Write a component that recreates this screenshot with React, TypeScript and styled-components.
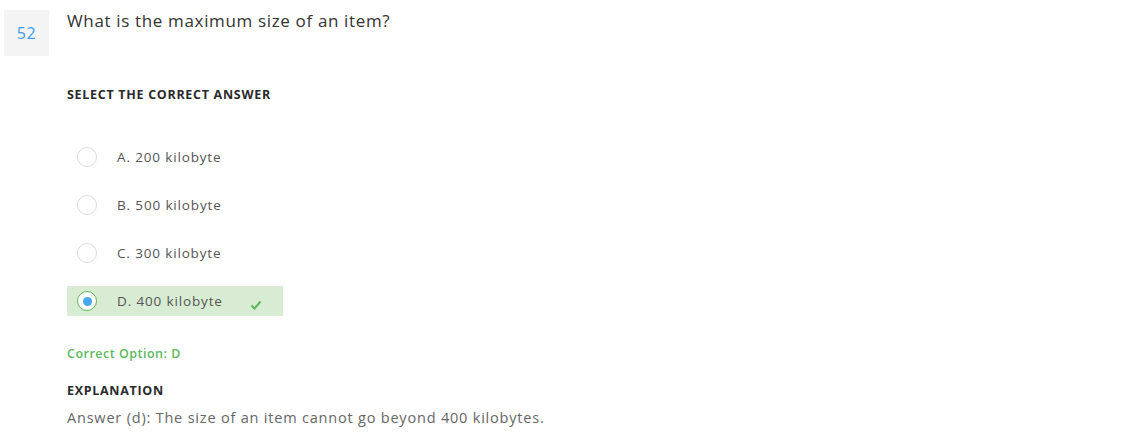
import React from "react";
import styled, { createGlobalStyle } from "styled-components";

const GlobalStyle = createGlobalStyle`
  body {
    margin: 0;
    background: #fff;
    font-family: "Open Sans", "Liberation Sans", sans-serif;
  }
`;

const Page = styled.div`
  display: flex;
  align-items: flex-start;
  padding: 10px 0 0 4px;
  gap: 18px;
`;

const NumberBox = styled.div`
  width: 45px;
  height: 46px;
  background: #f4f4f4;
  color: #3d9bf0;
  font-size: 16px;
  letter-spacing: 0.5px;
  display: flex;
  align-items: center;
  justify-content: center;
`;

const Body = styled.div`
  display: flex;
  flex-direction: column;
`;

const Question = styled.div`
  font-size: 17px;
  color: #333;
  letter-spacing: 0.65px;
  line-height: 22px;
`;

const Label = styled.div<{ $top: number }>`
  font-size: 12.5px;
  font-weight: 700;
  color: #2a2a2a;
  letter-spacing: 0.7px;
  margin-top: ${(p) => p.$top}px;
  line-height: 16px;
`;

const Options = styled.div`
  display: flex;
  flex-direction: column;
  gap: 18px;
  margin-top: 39px;
`;

const Option = styled.div<{ $correct?: boolean }>`
  width: 216px;
  height: 30px;
  display: flex;
  align-items: center;
  padding-left: 10px;
  box-sizing: border-box;
  background: ${(p) => (p.$correct ? "#d8ecd4" : "transparent")};
`;

const Radio = styled.span<{ $checked?: boolean }>`
  width: 18px;
  height: 18px;
  border-radius: 50%;
  border: 1px solid ${(p) => (p.$checked ? "#5cb85c" : "#dcdcdc")};
  background: #fff;
  display: flex;
  align-items: center;
  justify-content: center;
  &::after {
    content: "";
    width: 9px;
    height: 9px;
    border-radius: 50%;
    background: #4aa8ec;
    display: ${(p) => (p.$checked ? "block" : "none")};
  }
`;

const OptionText = styled.span`
  font-size: 13.5px;
  color: #555;
  margin-left: 20px;
  letter-spacing: 0.85px;
`;

const Check = styled.svg`
  margin-left: 27px;
  margin-top: 8px;
`;

const Correct = styled.div`
  font-size: 12.5px;
  font-weight: 600;
  color: #5cb85c;
  letter-spacing: 0.5px;
  margin-top: 30px;
  line-height: 16px;
`;

const Explanation = styled.div`
  font-size: 14.5px;
  color: #666;
  margin-top: 9px;
  letter-spacing: 0.8px;
`;

const options = [
  { key: "A", text: "200 kilobyte" },
  { key: "B", text: "500 kilobyte" },
  { key: "C", text: "300 kilobyte" },
  { key: "D", text: "400 kilobyte", correct: true },
];

export default function App() {
  return (
    <>
      <GlobalStyle />
      <Page>
        <NumberBox>52</NumberBox>
        <Body>
          <Question>What is the maximum size of an item?</Question>
          <Label $top={55}>SELECT THE CORRECT ANSWER</Label>
          <Options>
            {options.map((o) => (
              <Option key={o.key} $correct={o.correct}>
                <Radio $checked={o.correct} />
                <OptionText>
                  {o.key}. {o.text}
                </OptionText>
                {o.correct && (
                  <Check width="12" height="10" viewBox="0 0 12 10">
                    <path d="M1.5 5.5 L4.5 8.5 L10.5 1.5" fill="none" stroke="#5cb85c" strokeWidth="2" />
                  </Check>
                )}
              </Option>
            ))}
          </Options>
          <Correct>Correct Option: D</Correct>
          <Label $top={21}>EXPLANATION</Label>
          <Explanation>Answer (d): The size of an item cannot go beyond 400 kilobytes.</Explanation>
        </Body>
      </Page>
    </>
  );
}
